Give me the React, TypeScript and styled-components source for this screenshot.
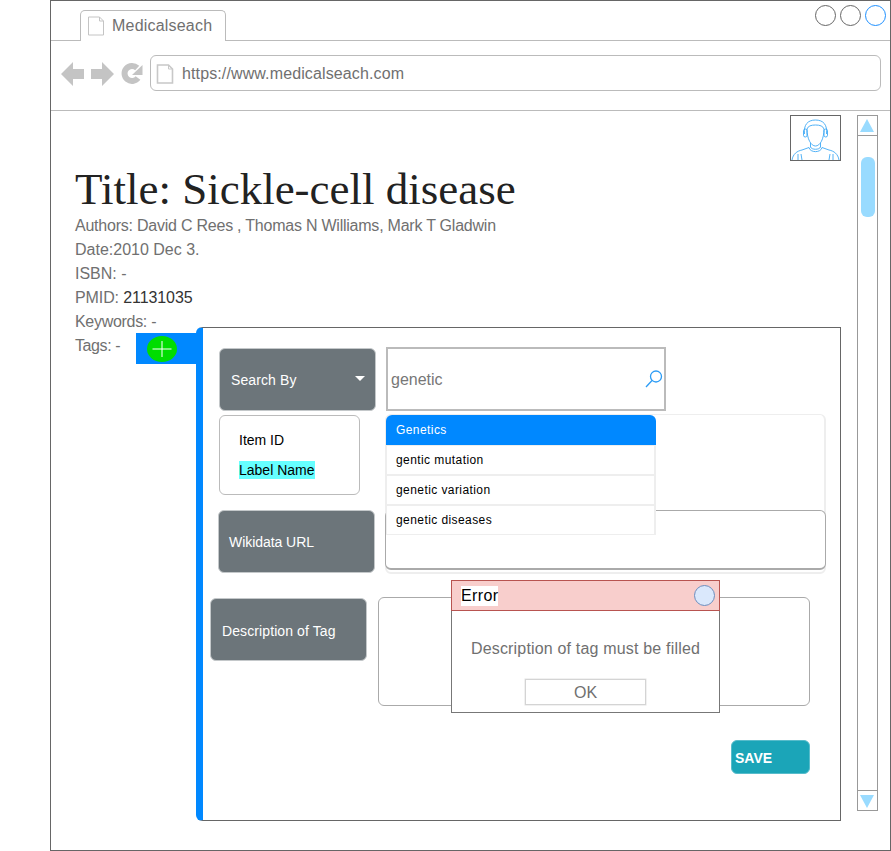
import React from "react";
import styled, { createGlobalStyle } from "styled-components";

const GlobalStyle = createGlobalStyle`
  html, body {
    margin: 0;
    padding: 0;
    background: #fff;
    font-family: "Liberation Sans", Arial, sans-serif;
  }
  * {
    box-sizing: border-box;
  }
`;

const BLUE = "#0088ff";
const SLATE = "#6c757a";

const BrowserWindow = styled.div`
  width: 841px;
  height: 851px;
  margin-left: 50px;
  border: 1px solid #666;
  display: flex;
  flex-direction: column;
  overflow: hidden;
`;

const TabStrip = styled.div`
  height: 40px;
  flex: none;
  display: flex;
  align-items: flex-end;
  padding-left: 29px;
  border-bottom: 1px solid #bbb;
`;

const Tab = styled.div`
  width: 146px;
  height: 31px;
  margin-bottom: -1px;
  padding-left: 6px;
  display: flex;
  align-items: center;
  gap: 7px;
  background: #fff;
  border: 1px solid #bbb;
  border-bottom: none;
  border-radius: 5px 5px 0 0;
  font-size: 16px;
  letter-spacing: 0.2px;
  color: #707070;
`;

const WindowControls = styled.div`
  margin-left: auto;
  align-self: flex-start;
  display: flex;
  gap: 4px;
  padding: 4px 4px 0 0;
`;

const WindowDot = styled.span<{ $active?: boolean }>`
  width: 21px;
  height: 21px;
  border-radius: 50%;
  border: 1px solid ${(p) => (p.$active ? "#1e90ff" : "#666")};
`;

const Toolbar = styled.div`
  height: 70px;
  flex: none;
  display: flex;
  align-items: center;
  padding: 0 9px 0 10px;
  border-bottom: 1px solid #bbb;
`;

const NavIcons = styled.div`
  display: flex;
  align-items: center;
  gap: 7px;
  margin: -4px 7px 0 0;
`;

const AddressBar = styled.div`
  flex: 1;
  height: 36px;
  margin-top: -6px;
  display: flex;
  align-items: center;
  gap: 8px;
  padding: 2px 0 0 5px;
  border: 1px solid #bbb;
  border-radius: 6px;
  font-size: 16px;
  letter-spacing: 0.12px;
  color: #707070;
`;

const PageBody = styled.div`
  flex: 1;
  display: flex;
  align-items: flex-start;
  padding-top: 4px;
`;

const Main = styled.div`
  width: 806px;
  flex: none;
`;

const AvatarRow = styled.div`
  display: flex;
  justify-content: flex-end;
  padding-right: 16px;
`;

const Avatar = styled.div`
  width: 51px;
  height: 46px;
  border: 1px solid #666;
  display: flex;
`;

const Title = styled.h1`
  margin: 3px 0 0 24px;
  font-family: "Liberation Serif", serif;
  font-weight: 400;
  font-size: 45px;
  line-height: 50px;
  color: #222;
`;

const MetaLine = styled.div<{ $tracking?: number }>`
  margin-left: 24px;
  height: 24px;
  line-height: 24px;
  font-size: 16px;
  letter-spacing: ${(p) => p.$tracking ?? 0}px;
  color: #707070;
`;

const Strong = styled.span`
  color: #333;
`;

const TagRow = styled.div`
  display: flex;
  align-items: flex-start;
  margin-top: -7px;
`;

const TagsLabel = styled.div`
  width: 61px;
  margin: 7px 0 0 24px;
  line-height: 24px;
  font-size: 16px;
  letter-spacing: -0.4px;
  color: #707070;
`;

const AddTab = styled.div`
  width: 60px;
  height: 31px;
  margin-top: 6px;
  padding-left: 11px;
  display: flex;
  align-items: center;
  background: ${BLUE};
`;

const Panel = styled.section`
  position: relative;
  width: 645px;
  height: 494px;
  display: flex;
  flex-direction: column;
  padding-top: 20px;
  border: 1px solid #666;
  border-left: 7px solid ${BLUE};
  border-radius: 6px 0 0 6px;
`;

const FieldLabel = styled.div`
  width: 157px;
  height: 63px;
  flex: none;
  display: flex;
  align-items: center;
  justify-content: space-between;
  padding: 0 10px 0 11px;
  background: ${SLATE};
  border: 1px solid #c4c8ca;
  border-radius: 6px;
  font-size: 14px;
  letter-spacing: 0.1px;
  color: #fff;
`;

const WikidataLabel = styled(FieldLabel)`
  padding-left: 10px;
  letter-spacing: -0.05px;
`;

const DescriptionLabel = styled(FieldLabel)`
  padding-top: 2px;
`;

const SearchRow = styled.div`
  display: flex;
  gap: 10px;
  margin-left: 16px;
`;

const Caret = styled.span`
  width: 0;
  height: 0;
  margin-top: -2px;
  border-left: 5px solid transparent;
  border-right: 5px solid transparent;
  border-top: 5px solid #fff;
`;

const SearchBox = styled.div`
  position: relative;
  width: 280px;
  height: 64px;
  margin-top: -1px;
  display: flex;
  align-items: center;
  justify-content: space-between;
  padding: 2px 1px 0 3px;
  border: 2px solid #bbb;
  font-size: 16px;
  color: #777;
`;

const Suggestions = styled.ul`
  position: absolute;
  top: 66px;
  left: -2px;
  width: 270px;
  margin: 0;
  padding: 0;
  list-style: none;
  z-index: 2;
`;

const Suggestion = styled.li<{ $active?: boolean }>`
  height: 30px;
  display: flex;
  align-items: center;
  padding-left: ${(p) => (p.$active ? 10 : 9)}px;
  font-size: 12px;
  letter-spacing: 0.42px;
  background: ${(p) => (p.$active ? BLUE : "#fff")};
  color: ${(p) => (p.$active ? "#fff" : "#000")};
  border: ${(p) => (p.$active ? "none" : "1px solid #eee")};
  border-width: ${(p) => (p.$active ? "0" : "1px 2px 1px 1px")};
  border-radius: ${(p) => (p.$active ? "6px 6px 0 0" : "0")};
`;

const MiddleGrid = styled.div`
  display: flex;
  gap: 10px;
  margin: 3px 0 0 15px;
`;

const MiddleLeft = styled.div`
  width: 157px;
  flex: none;
  display: flex;
  flex-direction: column;
  gap: 15px;
  padding-top: 1px;
`;

const OptionBox = styled.div`
  width: 141px;
  height: 80px;
  margin-left: 1px;
  padding: 15px 0 0 19px;
  display: flex;
  flex-direction: column;
  align-items: flex-start;
  gap: 12px;
  border: 1px solid #bbb;
  border-radius: 6px;
  font-size: 14px;
  line-height: 18px;
  color: #000;
`;

const OptionHit = styled.span`
  background: #66ffff;
`;

const FaintBox = styled.div`
  width: 441px;
  height: 160px;
  display: flex;
  flex-direction: column;
  justify-content: flex-end;
  padding-bottom: 2px;
  border: 2px solid #eee;
  border-top-width: 1px;
  border-radius: 6px;
`;

const UrlInput = styled.div`
  height: 60px;
  margin: 0 -2px;
  background: #fff;
  border: 1px solid #aaa;
  border-bottom-width: 2px;
  border-radius: 6px;
`;

const DescriptionRow = styled.div`
  display: flex;
  gap: 11px;
  margin: 24px 0 0 7px;
`;

const TextArea = styled.div`
  width: 432px;
  height: 109px;
  margin-top: -1px;
  border: 1px solid #aaa;
  border-radius: 6px;
`;

const SaveRow = styled.div`
  display: flex;
  justify-content: flex-end;
  padding-right: 30px;
  margin-top: 34px;
`;

const SaveButton = styled.button`
  width: 79px;
  height: 34px;
  padding: 2px 0 0 3px;
  text-align: left;
  background: #1ba5b8;
  border: 1px solid #57bccb;
  border-radius: 6px;
  font-family: "Liberation Sans", Arial, sans-serif;
  font-size: 14px;
  font-weight: 700;
  color: #fff;
`;

const ErrorDialog = styled.div`
  position: absolute;
  left: 248px;
  top: 252px;
  width: 269px;
  height: 133px;
  z-index: 3;
  display: flex;
  flex-direction: column;
  align-items: center;
  background: #fff;
  border: 1px solid #777;
  border-width: 0 1px 1px 1px;
`;

const ErrorHeader = styled.div`
  align-self: stretch;
  height: 31px;
  margin: 0 -1px;
  display: flex;
  align-items: center;
  justify-content: space-between;
  padding: 0 4px 0 9px;
  background: #f8cecc;
  border: 1px solid #b85450;
`;

const ErrorTitle = styled.span`
  background: #fff;
  font-size: 16px;
  line-height: 20px;
  letter-spacing: 0.35px;
  color: #000;
`;

const CloseDot = styled.span`
  width: 21px;
  height: 21px;
  border-radius: 50%;
  background: #dae8fc;
  border: 1px solid #6c8ebf;
`;

const ErrorText = styled.p`
  margin: 28px 0 0;
  font-size: 16px;
  line-height: 20px;
  letter-spacing: 0.18px;
  color: #707070;
`;

const OkButton = styled.button`
  width: 121px;
  height: 26px;
  margin-top: 20px;
  padding: 1px 0 0;
  background: #fff;
  border: 1px solid #d4d4d4;
  box-shadow: 0 0 0 0.5px #e4e4e4;
  font-family: "Liberation Sans", Arial, sans-serif;
  font-size: 16px;
  color: #707070;
`;

const Scrollbar = styled.div`
  width: 21px;
  height: 696px;
  flex: none;
  display: flex;
  flex-direction: column;
  border: 1px solid #999;
`;

const ScrollButton = styled.div<{ $down?: boolean }>`
  height: 20px;
  flex: none;
  display: flex;
  align-items: center;
  justify-content: center;
  padding-right: 1px;
  border-${(p) => (p.$down ? "top" : "bottom")}: 1px solid #999;
`;

const ScrollTrack = styled.div`
  flex: 1;
  padding: 21px 3px 0;
`;

const ScrollThumb = styled.div`
  height: 60px;
  width: 14px;
  background: #99dbff;
  border-radius: 6px;
`;

const DocIcon = ({ thick }: { thick?: boolean }) => (
  <svg width="18" height="20" viewBox="0 0 18 20" fill="none" stroke={thick ? "#c8c8c8" : "#c4c4c4"} strokeWidth={thick ? 1.6 : 1}>
    <path d="M1.500 1h11l4 4v14h-15z" />
    <path d="M12.500 1v4h4" strokeWidth="1" />
  </svg>
);

const NavArrow = ({ right }: { right?: boolean }) => (
  <svg width="23" height="24" viewBox="0 0 23 24" fill="#c4c4c4">
    <polygon points={right ? "0,7 11,7 11,0 23,12 11,24 11,17 0,17" : "23,7 12,7 12,0 0,12 12,24 12,17 23,17"} />
  </svg>
);

const ReloadIcon = () => (
  <svg width="22" height="23" viewBox="0 0 22 23" fill="none">
    <path d="M17 16a7.500 7.500 0 1 1-.8-10" stroke="#c4c4c4" strokeWidth="6" />
    <polygon points="21.500,3 21.500,13 11,13" fill="#c4c4c4" />
  </svg>
);

const AvatarIcon = () => (
  <svg width="49" height="44" viewBox="0 0 49 44" fill="none" stroke="#3fa9f5" strokeWidth="0.9">
    <path d="M16 13c0 10 4 17 8.500 17s8.500-7 8.500-17" />
    <path d="M16 13c1-3 4-4 8.500-4s7.500 1 8.500 4" />
    <path d="M13.500 18c-1-9 3-14 11-14s12 5 11 14" />
    <rect x="12.500" y="13" width="3.500" height="8" rx="1.750" />
    <rect x="33" y="13" width="3.500" height="8" rx="1.750" />
    <path d="M19.500 27v4c1 3 9 3 10 0v-4" />
    <path d="M18 31.500c1 5.500 12 5.500 13 0" />
    <path d="M1 44c1-6 5-9 10-10l7-2.500M48 44c-1-6-5-9-10-10l-7-2.500" />
    <path d="M7 44v-6M11 44l-1-6M42 44v-6M38 44l1-6" />
  </svg>
);

const SearchGlyph = styled.svg`
  margin-top: -2px;
`;

const SearchIcon = () => (
  <SearchGlyph width="18" height="20" viewBox="0 0 18 20" fill="none" stroke="#2c9cf5" strokeWidth="1.300">
    <circle cx="11" cy="7.500" r="5.500" />
    <path d="M7 11.500L1 18" />
  </SearchGlyph>
);

const PlusBadge = () => (
  <svg width="30" height="26" viewBox="0 0 30 26">
    <ellipse cx="15" cy="13" rx="15" ry="13" fill="#00dd00" />
    <path d="M5.500 13h19M15 5v16" stroke="#fff" strokeWidth="1" />
  </svg>
);

const ScrollArrow = ({ down }: { down?: boolean }) => (
  <svg width="14" height="14" viewBox="0 0 14 14" fill="#99dbff">
    <polygon points={down ? "0,1 14,1 7,14" : "0,13 14,13 7,0"} />
  </svg>
);

const suggestions = ["Genetics", "gentic mutation", "genetic variation", "genetic diseases"];

export default function App() {
  return (
    <>
      <GlobalStyle />
      <BrowserWindow>
        <TabStrip>
          <Tab>
            <DocIcon />
            Medicalseach
          </Tab>
          <WindowControls>
            <WindowDot />
            <WindowDot />
            <WindowDot $active />
          </WindowControls>
        </TabStrip>
        <Toolbar>
          <NavIcons>
            <NavArrow />
            <NavArrow right />
            <ReloadIcon />
          </NavIcons>
          <AddressBar>
            <DocIcon thick />
            https://www.medicalseach.com
          </AddressBar>
        </Toolbar>
        <PageBody>
          <Main>
            <AvatarRow>
              <Avatar>
                <AvatarIcon />
              </Avatar>
            </AvatarRow>
            <Title>Title: Sickle-cell disease</Title>
            <MetaLine $tracking={-0.23}>Authors: David C Rees , Thomas N Williams, Mark T Gladwin</MetaLine>
            <MetaLine>Date:2010 Dec 3.</MetaLine>
            <MetaLine>ISBN: -</MetaLine>
            <MetaLine $tracking={-0.1}>
              PMID: <Strong>21131035</Strong>
            </MetaLine>
            <MetaLine $tracking={-0.3}>Keywords: -</MetaLine>
            <TagRow>
              <TagsLabel>Tags: -</TagsLabel>
              <AddTab>
                <PlusBadge />
              </AddTab>
              <Panel>
                <SearchRow>
                  <FieldLabel>
                    Search By
                    <Caret />
                  </FieldLabel>
                  <SearchBox>
                    genetic
                    <SearchIcon />
                    <Suggestions>
                      {suggestions.map((item, index) => (
                        <Suggestion key={item} $active={index === 0}>
                          {item}
                        </Suggestion>
                      ))}
                    </Suggestions>
                  </SearchBox>
                </SearchRow>
                <MiddleGrid>
                  <MiddleLeft>
                    <OptionBox>
                      <span>Item ID</span>
                      <OptionHit>Label Name</OptionHit>
                    </OptionBox>
                    <WikidataLabel>Wikidata URL</WikidataLabel>
                  </MiddleLeft>
                  <FaintBox>
                    <UrlInput />
                  </FaintBox>
                </MiddleGrid>
                <DescriptionRow>
                  <DescriptionLabel>Description of Tag</DescriptionLabel>
                  <TextArea />
                </DescriptionRow>
                <SaveRow>
                  <SaveButton>SAVE</SaveButton>
                </SaveRow>
                <ErrorDialog>
                  <ErrorHeader>
                    <ErrorTitle>Error</ErrorTitle>
                    <CloseDot />
                  </ErrorHeader>
                  <ErrorText>Description of tag must be filled</ErrorText>
                  <OkButton>OK</OkButton>
                </ErrorDialog>
              </Panel>
            </TagRow>
          </Main>
          <Scrollbar>
            <ScrollButton>
              <ScrollArrow />
            </ScrollButton>
            <ScrollTrack>
              <ScrollThumb />
            </ScrollTrack>
            <ScrollButton $down>
              <ScrollArrow down />
            </ScrollButton>
          </Scrollbar>
        </PageBody>
      </BrowserWindow>
    </>
  );
}
